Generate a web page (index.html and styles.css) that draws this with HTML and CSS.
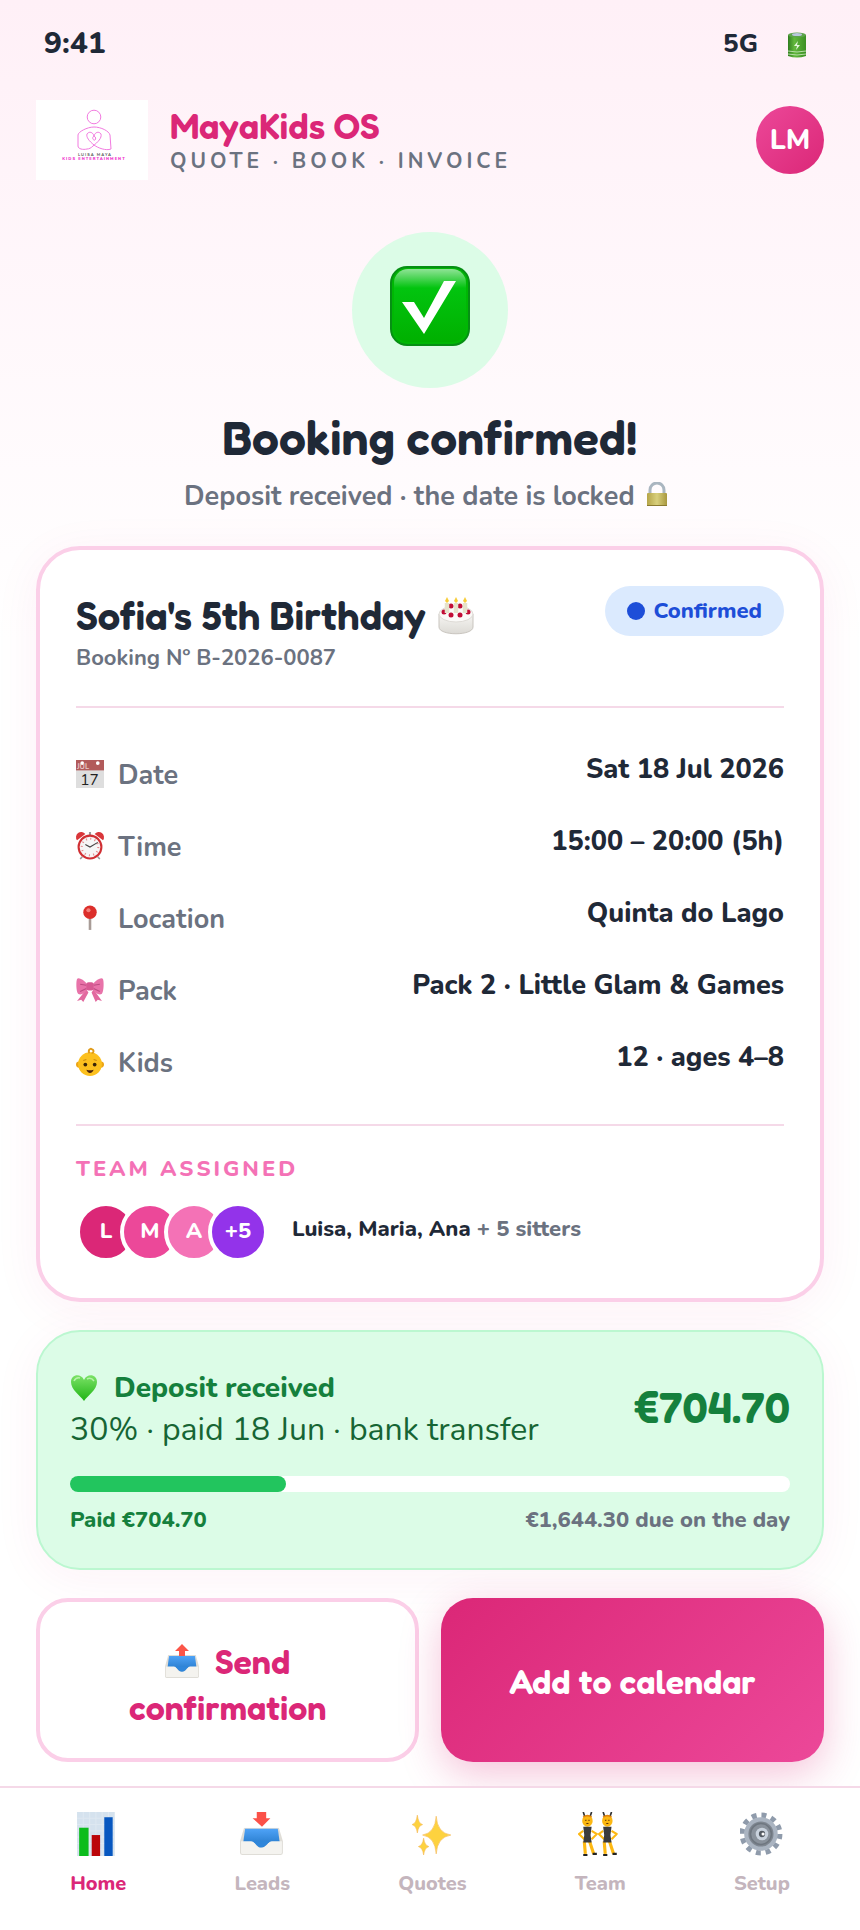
FILE: index.html
```
<!DOCTYPE html>
<html lang="en">
<head>
    <meta charset="UTF-8">
    <meta name="viewport" content="width=device-width, initial-scale=1.0">
    <title>MayaKids OS - Booking confirmed</title>
    <link rel="stylesheet" href="styles.css">
</head>
<body>
    <!-- shared shapes -->
    <svg class="defs" width="0" height="0" aria-hidden="true">
        <defs>
            <linearGradient id="g-check" x1="0" y1="0" x2="0" y2="1">
                <stop offset="0" stop-color="#8fe396"/>
                <stop offset=".26" stop-color="#02c40f"/>
                <stop offset="1" stop-color="#00b000"/>
            </linearGradient>
            <linearGradient id="g-blue" x1="0" y1="0" x2="0" y2="1">
                <stop offset="0" stop-color="#4fa3f7"/>
                <stop offset="1" stop-color="#2b7fd0"/>
            </linearGradient>
            <linearGradient id="g-heart" x1="0" y1="0" x2="0" y2="1">
                <stop offset="0" stop-color="#7be267"/>
                <stop offset="1" stop-color="#1fb414"/>
            </linearGradient>
            <linearGradient id="g-batt" x1="0" y1="0" x2="1" y2="0">
                <stop offset="0" stop-color="#2f7d1e"/>
                <stop offset=".35" stop-color="#62b83c"/>
                <stop offset="1" stop-color="#3c8f24"/>
            </linearGradient>
            <linearGradient id="g-gold" x1="0" y1="0" x2="1" y2="0">
                <stop offset="0" stop-color="#b5a548"/>
                <stop offset=".5" stop-color="#d8cf7c"/>
                <stop offset="1" stop-color="#a8983f"/>
            </linearGradient>
            <linearGradient id="g-cake" x1="0" y1="0" x2="0" y2="1">
                <stop offset="0" stop-color="#f7f6f3"/>
                <stop offset="1" stop-color="#dcdad5"/>
            </linearGradient>
            <symbol id="tray" viewBox="0 0 42 26" preserveAspectRatio="none">
                <path d="M4 0h34l4 13v11q0 2-2 2H2q-2 0-2-2V13z" fill="#dfddd7"/>
                <path d="M5 1h32l2 14H3z" fill="url(#g-blue)"/>
                <path d="M1 13h10c4 0 5 6 10 6s6-6 10-6h10v11q0 1-1 1H2q-1 0-1-1z" fill="#f4f3ef"/>
                <path d="M11 13c4 0 5 6 10 6s6-6 10-6" fill="#2f86da"/>
            </symbol>
            <symbol id="dancer" viewBox="0 0 19 42">
                <path d="M5 0l2 6M13 0l-2 6" stroke="#333" stroke-width="1.6"/>
                <path d="M5 18l-4 3 5 5M13 18l5 3-5 5" fill="none" stroke="#fdb813" stroke-width="2"/>
                <path d="M6 28l1 12M11 28l4 12" stroke="#fdb813" stroke-width="3"/>
                <ellipse cx="9" cy="8.500" rx="5" ry="5.500" fill="#fbb712"/>
                <path d="M5 5q4-3 8 0" fill="none" stroke="#e0850e" stroke-width="1.500"/>
                <path d="M7 8h1M10 8h1M8 11h2" stroke="#5b3207"/>
                <path d="M5 14h8l-1 8 1 7H5l1-7z" fill="#3b3b3d"/>
                <path d="M5 41h4M14 40h4" stroke="#222" stroke-width="2"/>
            </symbol>
        </defs>
    </svg>

    <div class="status-bar">
        <span class="clock">9:41</span>
        <span class="signal">5G
            <svg class="battery" viewBox="0 0 38 28" aria-label="Battery">
                <path d="M10 5v21q9 3 18 0V5z" fill="url(#g-batt)"/>
                <ellipse cx="19" cy="5" rx="9" ry="2.500" fill="#5da34a"/>
                <ellipse cx="19" cy="4.500" rx="5" ry="1.500" fill="#b9c6dd"/>
                <path d="M10 21q9 2 18 0M10 24q9 2 18 0" fill="none" stroke="#b6dca6"/>
                <path d="M20 11l-4 5h3l-1 4 4-5h-3z" fill="#e3f5da"/>
            </svg>
        </span>
    </div>

    <header class="app-header">
        <svg class="logo" viewBox="0 0 112 80" role="img" aria-label="Luisa Maya Kids Entertainment">
            <rect width="112" height="80" fill="#fff"/>
            <g fill="none" stroke="#f27be0" stroke-width="1">
                <circle cx="58" cy="17" r="6.800"/>
                <path d="M51 49c-4 1-9 0-9-3V35c0-3 9-8 16-8s15 4 16 8l1 14c-5 2-13-1-17-4-5-4-8-8-7-11 2-3 6-2 7 2 1-4 5-5 7-2 1 4-3 8-8 12-2 2-4 3-6 3zM58 36c-3 2 0 5 1 4s1-3-1-4"/>
            </g>
            <text x="59" y="56" class="logo-name">LUISA MAYA</text>
            <text x="58" y="60" class="logo-tag">KIDS ENTERTAINMENT</text>
        </svg>
        <div class="brand">
            <div class="brand-name">MayaKids OS</div>
            <div class="brand-sub">QUOTE · BOOK · INVOICE</div>
        </div>
        <div class="user">LM</div>
    </header>

    <main>
        <section class="hero">
            <div class="hero-circle">
                <svg class="hero-check" viewBox="0 0 80 80" aria-hidden="true">
                    <rect width="80" height="80" rx="17" fill="#068f14"/>
                    <rect x="2" y="2" width="76" height="76" rx="15" fill="#00b704"/>
                    <rect x="4" y="3" width="72" height="73" rx="14" fill="url(#g-check)"/>
                    <path d="M12 36h12l10 16L54 15h12L34 68z" fill="#fff"/>
                </svg>
            </div>
            <h1>Booking confirmed!</h1>
            <p>Deposit received · the date is locked
                <svg class="lock" viewBox="0 0 22 26" aria-hidden="true">
                    <path d="M4 12V8a7 7 0 0 1 14 0v4" fill="none" stroke="#aab6c0" stroke-width="3"/>
                    <rect x="1" y="11" width="20" height="13" rx="1" fill="url(#g-gold)"/>
                    <path d="M1 23.500h20" stroke="#8a7a30"/>
                </svg>
            </p>
        </section>

        <section class="card">
            <div class="card-head">
                <div>
                    <h2>Sofia's 5th Birthday
                        <svg class="cake" viewBox="0 0 36 38" aria-hidden="true">
                            <path d="M1 17v13c0 9 34 9 34 0V17z" fill="url(#g-cake)" stroke="#c9c5bf"/>
                            <ellipse cx="18" cy="17" rx="17" ry="8" fill="#fbfaf8" stroke="#dedbd6"/>
                            <g fill="#c20d35">
                                <circle cx="6" cy="15" r="2.500"/><circle cx="13" cy="18" r="2.500"/>
                                <circle cx="22" cy="18" r="2.500"/><circle cx="30" cy="15" r="2.500"/>
                                <circle cx="13" cy="9" r="2.500"/><circle cx="22" cy="9" r="2.500"/>
                            </g>
                            <path d="M9 6v10M18 6v10M27 6v10" stroke="#e6e2cb" stroke-width="4.500"/>
                            <path d="M9 0l2 4-2 2-2-2zM18 0l2 4-2 2-2-2zM27 0l2 4-2 2-2-2z" fill="#f7cd3b"/>
                        </svg>
                    </h2>
                    <div class="booking-no">Booking Nº B-2026-0087</div>
                </div>
                <span class="badge"><i class="dot"></i>Confirmed</span>
            </div>

            <dl class="details">
                <div class="row">
                    <dt>
                        <svg viewBox="0 0 27 27" aria-hidden="true">
                            <rect width="27" height="27" fill="#dedede"/>
                            <rect width="27" height="10" fill="#b25a5a"/>
                            <circle cx="6" cy="3" r="1.800" fill="#fff"/><circle cx="21" cy="3" r="1.800" fill="#fff"/>
                            <text x="1" y="9" class="cal-month">JUL</text>
                            <text x="13" y="24" class="cal-day">17</text>
                        </svg>
                        Date
                    </dt>
                    <dd>Sat 18 Jul 2026</dd>
                </div>
                <div class="row">
                    <dt>
                        <svg viewBox="0 0 27 27" aria-hidden="true">
                            <path d="M6 24l-2 2M21 24l2 2" stroke="#999" stroke-width="1.500"/>
                            <path d="M1 8a5 5 0 0 1 8-6zM26 8a5 5 0 0 0-8-6z" fill="#d9363a"/>
                            <path d="M13.500 0v3" stroke="#999" stroke-width="2"/>
                            <circle cx="13.500" cy="14.500" r="11" fill="#f6f6f6" stroke="#d02f33" stroke-width="2"/>
                            <circle cx="13.500" cy="14.500" r="8" fill="none" stroke="#e58a8c" stroke-width="2" stroke-dasharray="1 3.190"/>
                            <path d="M9 12l4.500 2.500L21 10" fill="none" stroke="#444" stroke-width="1"/>
                        </svg>
                        Time
                    </dt>
                    <dd>15:00 – 20:00 (5h)</dd>
                </div>
                <div class="row">
                    <dt>
                        <svg viewBox="0 0 27 27" aria-hidden="true">
                            <path d="M13.500 12v13" stroke="#a89c97" stroke-width="2.500"/>
                            <circle cx="13.500" cy="8" r="6.500" fill="#dc2f2b"/>
                            <circle cx="12" cy="6" r="2" fill="#f3817c"/>
                        </svg>
                        Location
                    </dt>
                    <dd>Quinta do Lago</dd>
                </div>
                <div class="row">
                    <dt>
                        <svg viewBox="0 0 27 27" aria-hidden="true">
                            <path d="M10 13L1 24l4-1 2 2 5-9zM17 13l8 11-4-1-2 2-4-9z" fill="#e2699f"/>
                            <path d="M11 8C7 3 2 1 1 3s-1 12 1 14 7 0 9-4zM16 8c4-5 9-7 10-5s1 12-1 14-7 0-9-4z" fill="#e873a9"/>
                            <path d="M10 9L4 8M10 12l-6 3M17 9l6-1M17 12l6 3" stroke="#bd4c82"/>
                            <rect x="10" y="6" width="7" height="8" rx="2" fill="#d75a93"/>
                        </svg>
                        Pack
                    </dt>
                    <dd>Pack 2 · Little Glam &amp; Games</dd>
                </div>
                <div class="row">
                    <dt>
                        <svg viewBox="0 0 27 27" aria-hidden="true">
                            <circle cx="3" cy="16" r="3" fill="#eda516"/><circle cx="24" cy="16" r="3" fill="#eda516"/>
                            <circle cx="13.500" cy="15.500" r="11.500" fill="#fcc01e"/>
                            <path d="M13 5c-2-3 1-5 2-4 3 1 2 4 0 4" fill="none" stroke="#e09a17" stroke-width="1.800"/>
                            <circle cx="9" cy="16" r="1.800" fill="#3a2508"/><circle cx="18" cy="16" r="1.800" fill="#3a2508"/>
                            <path d="M7 12l3-1M17 11l3 1" stroke="#c98a14"/>
                            <path d="M10 21q3.500 1 7 0-1 3-3.500 3T10 21z" fill="#4d230a"/>
                        </svg>
                        Kids
                    </dt>
                    <dd>12 · ages 4–8</dd>
                </div>
            </dl>

            <div class="team">
                <h3>TEAM ASSIGNED</h3>
                <div class="team-row">
                    <div class="avatars">
                        <span class="avatar rose">L</span>
                        <span class="avatar pink">M</span>
                        <span class="avatar light">A</span>
                        <span class="avatar purple">+5</span>
                    </div>
                    <div class="team-names">Luisa, Maria, Ana <span>+ 5 sitters</span></div>
                </div>
            </div>
        </section>

        <section class="deposit">
            <div class="deposit-top">
                <div>
                    <div class="deposit-title">
                        <svg class="heart" viewBox="0 0 28 28" aria-hidden="true">
                            <path d="M14 27C10 21 1 16 1 8c0-8 10-9 13-2 3-7 13-6 13 2 0 8-9 13-13 19z" fill="url(#g-heart)"/>
                            <path d="M4 7q2-4 6-3M17 5q4-2 7 2" fill="none" stroke="#b7f2a8" stroke-width="1.500"/>
                        </svg>
                        Deposit received
                    </div>
                    <div class="deposit-sub">30% · paid 18 Jun · bank transfer</div>
                </div>
                <div class="amount">€704.70</div>
            </div>
            <div class="bar"><div class="bar-fill" style="width: 30%"></div></div>
            <div class="deposit-foot">
                <span class="paid">Paid €704.70</span>
                <span class="due">€1,644.30 due on the day</span>
            </div>
        </section>

        <div class="actions">
            <button type="button" class="btn btn-outline">
                <svg class="outbox" viewBox="0 0 34 34" aria-hidden="true">
                    <use href="#tray" x="0" y="11" width="34" height="23"/>
                    <path d="M17 0l7 7h-4v5h-6V7h-4z" fill="#fb5548"/>
                </svg>
                Send confirmation
            </button>
            <button type="button" class="btn btn-primary">Add to calendar</button>
        </div>
    </main>

    <nav class="tabs">
        <a href="#" class="tab active">
            <svg viewBox="0 0 42 42" aria-hidden="true">
                <rect x="1" width="36" height="42" fill="#d5e2ee"/>
                <path d="M1 6h36M1 12h36M1 18h36M1 24h36M1 30h36M1 36h36M7 0v42M13 0v42M19 0v42M25 0v42M31 0v42" stroke="#dee8f1"/>
                <rect x="3" y="15" width="9" height="27" fill="#0cbc1c"/>
                <rect x="15" y="22" width="8" height="20" fill="#bb0509"/>
                <rect x="27" y="5" width="8" height="37" fill="#0757c0"/>
            </svg>
            Home
        </a>
        <a href="#" class="tab">
            <svg viewBox="0 0 42 42" aria-hidden="true">
                <use href="#tray" x="0" y="15" width="41" height="26"/>
                <path d="M16 0h9v6h4l-8 8-9-8h4z" fill="#fb5148"/>
            </svg>
            Leads
        </a>
        <a href="#" class="tab">
            <svg viewBox="0 0 42 42" aria-hidden="true">
                <g fill="#fdd23f" stroke="#f5b955" stroke-width=".6">
                    <path d="M25 4q1 16 14 18-13 2-14 18-1-16-13-18 12-2 13-18z"/>
                    <path d="M7 3q1 8 5 9-4 1-5 8-1-7-5-8 4-1 5-9z"/>
                    <path d="M13 25q1 7 5 8-4 1-5 8-1-7-5-8 4-1 5-8z"/>
                </g>
            </svg>
            Quotes
        </a>
        <a href="#" class="tab">
            <svg viewBox="0 0 42 42" aria-hidden="true">
                <use href="#dancer" x="0" y="0" width="19" height="42"/>
                <use href="#dancer" x="19" y="0" width="19" height="42"/>
            </svg>
            Team
        </a>
        <a href="#" class="tab">
            <svg viewBox="0 0 42 42" aria-hidden="true">
                <circle cx="20" cy="21" r="18" fill="none" stroke="#8f9bab" stroke-width="5" stroke-dasharray="4.700 4.720"/>
                <circle cx="20" cy="21" r="14" fill="#7f8791" stroke="#aab4c1" stroke-width="4"/>
                <circle cx="20" cy="21" r="10" fill="#8a929c" stroke="#6f7780" stroke-width="1.500"/>
                <circle cx="21" cy="21" r="6" fill="#c9d2dd"/>
                <circle cx="21" cy="21" r="3" fill="#545a62"/>
                <circle cx="22" cy="21" r="1.500" fill="#fff"/>
            </svg>
            Setup
        </a>
    </nav>
</body>
</html>
```
FILE: styles.css
```
* {
    box-sizing: border-box;
}

body {
    margin: 0;
    min-height: 100vh;
    display: flex;
    flex-direction: column;
    background: #fff linear-gradient(180deg, #fff0f7, #fff 640px) no-repeat;
    color: #1f2937;
    font-family: Nunito, Lato, sans-serif;
    font-weight: 700;
}

h1, h2, h3, p, dl, dd {
    margin: 0;
}

.defs {
    position: absolute;
}

h1, h2, .brand-name, .amount, .btn {
    font-family: Fredoka, Lato, sans-serif;
    font-weight: 600;
}

.status-bar {
    display: flex;
    justify-content: space-between;
    padding: 24px 44px 0;
    line-height: 40px;
    font-weight: 800;
}

.clock {
    font-size: 30px;
}

.signal {
    display: flex;
    align-items: center;
    gap: 20px;
    font-size: 26px;
}

.battery {
    width: 38px;
    height: 28px;
}

.app-header {
    display: flex;
    align-items: center;
    gap: 22px;
    padding: 36px 36px 0;
}

.logo {
    width: 112px;
    height: 80px;
}

.logo-name {
    font-size: 4px;
    letter-spacing: 1px;
    text-anchor: middle;
    fill: #555;
}

.logo-tag {
    font-size: 4px;
    font-weight: 900;
    letter-spacing: 1px;
    text-anchor: middle;
    fill: #f03fd0;
}

.brand {
    flex: 1;
}

.brand-name {
    font-size: 36px;
    line-height: 42px;
    color: #db2777;
}

.brand-sub {
    font-size: 21px;
    line-height: 28px;
    letter-spacing: 4px;
    color: #6b7280;
}

.user {
    width: 68px;
    height: 68px;
    border-radius: 50%;
    background: linear-gradient(135deg, #ec4899, #db2777);
    color: #fff;
    font-size: 28px;
    font-weight: 800;
    line-height: 68px;
    text-align: center;
}

main {
    flex: 1;
    padding: 52px 36px 24px;
}

.hero {
    text-align: center;
}

.hero-circle {
    display: flex;
    justify-content: center;
    width: 156px;
    height: 156px;
    margin: 0 auto 20px;
    padding-top: 34px;
    border-radius: 50%;
    background: #dcfce7;
}

.hero-check {
    width: 80px;
    height: 80px;
}

.hero h1 {
    font-size: 48px;
    line-height: 58px;
}

.hero p {
    margin-top: 12px;
    font-size: 27px;
    line-height: 38px;
    color: #6b7280;
}

.lock {
    width: 22px;
    height: 26px;
    margin: 0 8px 0 4px;
    vertical-align: -3px;
}

.card {
    margin-top: 30px;
    padding: 36px;
    border: 4px solid #fbcfe8;
    border-radius: 44px;
    background: #fff;
    box-shadow: 0 8px 48px rgba(219, 39, 119, 0.06);
}

.card-head {
    display: flex;
    justify-content: space-between;
    align-items: flex-start;
    padding-bottom: 34px;
    border-bottom: 2px solid #f5d9e8;
}

.card-head h2 {
    font-size: 40px;
    line-height: 58px;
}

.cake {
    width: 36px;
    height: 38px;
    margin-left: 2px;
    vertical-align: -5px;
}

.booking-no {
    font-size: 22px;
    line-height: 28px;
    color: #6b7280;
}

.badge {
    display: flex;
    align-items: center;
    gap: 8px;
    padding: 0 22px;
    border-radius: 25px;
    background: #dbeafe;
    color: #1d4ed8;
    font-size: 22px;
    font-weight: 800;
    line-height: 50px;
}

.dot {
    width: 18px;
    height: 18px;
    border-radius: 50%;
    background: #1d4ed8;
}

.details {
    padding: 26px 0 30px;
    border-bottom: 2px solid #f5d9e8;
}

.row {
    display: flex;
    justify-content: space-between;
    padding: 16px 0 4px;
    font-size: 27px;
}

.row dt {
    display: flex;
    align-items: center;
    gap: 14px;
    line-height: 52px;
    color: #6b7280;
}

.row dt svg {
    width: 28px;
    height: 28px;
    margin-bottom: 4px;
    overflow: visible;
}

.row dd {
    font-weight: 800;
    line-height: 40px;
    text-align: right;
}

.cal-month {
    font-size: 7px;
    fill: #e8c9c9;
}

.cal-day {
    font-size: 15px;
    font-weight: 400;
    text-anchor: middle;
    fill: #222;
}

.team {
    padding-top: 28px;
}

.team h3 {
    font-size: 22px;
    font-weight: 800;
    line-height: 30px;
    letter-spacing: 3px;
    color: #f472b6;
}

.team-row {
    display: flex;
    gap: 24px;
    margin-top: 18px;
}

.avatars {
    display: flex;
}

.avatar {
    width: 60px;
    height: 60px;
    border: 4px solid #fff;
    border-radius: 50%;
    color: #fff;
    font-size: 22px;
    font-weight: 800;
    line-height: 50px;
    text-align: center;
}

.avatar + .avatar {
    margin-left: -16px;
}

.rose { background: #db2777; }
.pink { background: #ec4899; }
.light { background: #f472b6; }
.purple { background: #9333ea; }

.team-names {
    font-size: 22px;
    font-weight: 800;
    line-height: 54px;
}

.team-names span {
    color: #6b7280;
}

.deposit {
    margin-top: 28px;
    padding: 32px;
    border: 2px solid #bbf7d0;
    border-radius: 44px;
    background: #dcfce7;
    box-shadow: 0 8px 48px rgba(219, 39, 119, 0.06);
}

.deposit-top {
    display: flex;
    justify-content: space-between;
    align-items: center;
}

.deposit-title {
    display: flex;
    align-items: center;
    gap: 16px;
    font-size: 28px;
    font-weight: 800;
    line-height: 48px;
    color: #15803d;
}

.heart {
    width: 28px;
    height: 28px;
}

.deposit-sub {
    font-size: 32px;
    font-weight: 400;
    line-height: 36px;
    color: #166534;
}

.amount {
    font-size: 44px;
    color: #15803d;
}

.bar {
    height: 16px;
    margin-top: 28px;
    border-radius: 8px;
    background: #fff;
}

.bar-fill {
    height: 16px;
    border-radius: 8px;
    background: #22c55e;
}

.deposit-foot {
    display: flex;
    justify-content: space-between;
    margin-top: 12px;
    font-size: 22px;
    font-weight: 800;
    line-height: 32px;
}

.paid {
    color: #15803d;
}

.due {
    color: #6b7280;
}

.actions {
    display: grid;
    grid-template-columns: 1fr 1fr;
    gap: 22px;
    margin-top: 28px;
}

.btn {
    border: 0;
    border-radius: 32px;
    font-size: 34px;
    line-height: 46px;
    cursor: pointer;
}

.btn-outline {
    padding: 37px 72px 27px;
    border: 4px solid #fbcfe8;
    background: #fff;
    color: #db2777;
}

.btn-primary {
    padding: 38px 36px 34px;
    background: linear-gradient(135deg, #db2777, #ec4899);
    color: #fff;
    box-shadow: 0 12px 40px rgba(219, 39, 119, 0.28);
}

.outbox {
    width: 34px;
    height: 34px;
    margin-right: 8px;
    vertical-align: -4px;
}

.tabs {
    position: relative;
    display: flex;
    justify-content: space-around;
    padding: 24px 16px 32px;
    border-top: 2px solid #f5d9e8;
    background: #fff;
}

.tab {
    display: flex;
    flex-direction: column;
    align-items: center;
    gap: 14px;
    color: #c4b5bd;
    font-size: 20px;
    font-weight: 800;
    line-height: 28px;
    text-decoration: none;
}

.tab.active {
    color: #db2777;
}

.tab svg {
    width: 44px;
    height: 44px;
}
```
